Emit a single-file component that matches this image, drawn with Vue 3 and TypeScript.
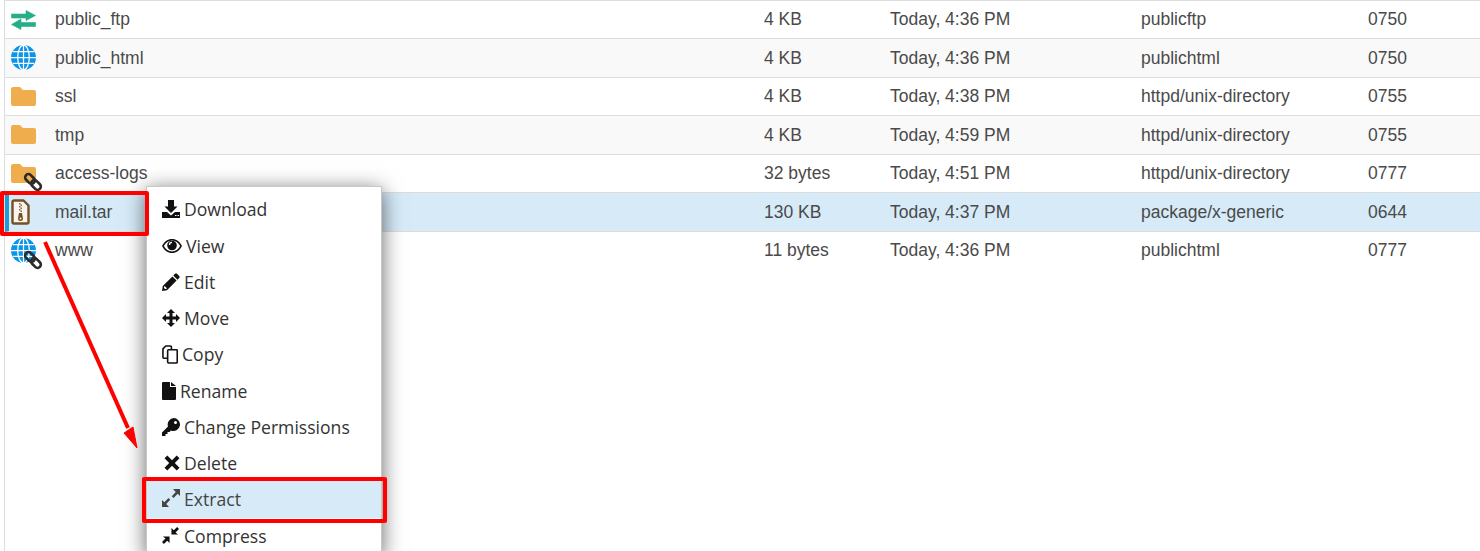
<script setup lang="ts">
interface Row { name: string; icon: string; link?: boolean; size: string; date: string; type: string; perm: string; cls: string }
const rows: Row[] = [
  { name: 'public_ftp', icon: 'ftp', size: '4 KB', date: 'Today, 4:36 PM', type: 'publicftp', perm: '0750', cls: '' },
  { name: 'public_html', icon: 'globe', size: '4 KB', date: 'Today, 4:36 PM', type: 'publichtml', perm: '0750', cls: 'alt' },
  { name: 'ssl', icon: 'folder', size: '4 KB', date: 'Today, 4:38 PM', type: 'httpd/unix-directory', perm: '0755', cls: '' },
  { name: 'tmp', icon: 'folder', size: '4 KB', date: 'Today, 4:59 PM', type: 'httpd/unix-directory', perm: '0755', cls: 'alt' },
  { name: 'access-logs', icon: 'folder', link: true, size: '32 bytes', date: 'Today, 4:51 PM', type: 'httpd/unix-directory', perm: '0777', cls: '' },
  { name: 'mail.tar', icon: 'zip', size: '130 KB', date: 'Today, 4:37 PM', type: 'package/x-generic', perm: '0644', cls: 'sel' },
  { name: 'www', icon: 'globe', link: true, size: '11 bytes', date: 'Today, 4:36 PM', type: 'publichtml', perm: '0777', cls: 'last' },
]
const menu = ['Download', 'View', 'Edit', 'Move', 'Copy', 'Rename', 'Change Permissions', 'Delete', 'Extract', 'Compress']
</script>

<template>
  <div class="page">
    <div class="list">
      <div v-for="r in rows" :key="r.name" class="row" :class="r.cls">
        <div class="ic">
          <svg v-if="r.icon === 'ftp'" width="25" height="20" viewBox="0 0 25 20">
            <path fill="#25ae88" stroke="#25ae88" stroke-width=".6" stroke-linejoin="round" d="M.5 4H15V.5l9.500 5L15 10.500V8H.5zM24.500 12.500H10V9L.5 14.500 10 19.500V16.500h14.500z" />
          </svg>
          <svg v-else-if="r.icon === 'globe'" width="25" height="25" viewBox="0 0 26 26">
            <circle cx="13" cy="13" r="13" fill="#0a95e8" />
            <g fill="none" stroke="#fff" stroke-width="1.300">
              <ellipse cx="13" cy="13" rx="6" ry="13" />
              <path d="M13 0v26M0 13h26M2 7h22M2 19h22" />
            </g>
          </svg>
          <svg v-else-if="r.icon === 'folder'" width="25" height="19" viewBox="0 0 25 19">
            <path fill="#f0ad4e" d="M2 0h7l3 3h11a2 2 0 0 1 2 2v12a2 2 0 0 1-2 2H2a2 2 0 0 1-2-2V2a2 2 0 0 1 2-2z" />
          </svg>
          <svg v-else width="19" height="26" viewBox="0 0 19 26">
            <path fill="#f8f5ee" stroke="#7a4f22" stroke-width="2.400" stroke-linejoin="round" d="M3 1.500h9.500l5 5V23a1.500 1.500 0 0 1-1.500 1.500H3A1.500 1.500 0 0 1 1.500 23V3A1.500 1.500 0 0 1 3 1.500z" />
            <path fill="#8a6a45" d="M8 4h1.500v1.500H8zM9.500 5.500H11V7H9.500zM8 7h1.500v1.500H8zM9.500 8.500H11V10H9.500zM8 10h1.500v1.500H8zM9.500 11.500H11V13H9.500z" />
            <path fill="#7a4f22" fill-rule="evenodd" d="M8 14h3l1 5.500a2.500 2.500 0 1 1-5 0zm1.500 4.500a1 1 0 1 0 0 2 1 1 0 0 0 0-2z" />
          </svg>
          <svg v-if="r.link" class="chain" width="20" height="20" viewBox="0 0 20 20">
            <g fill="none" stroke-width="2.600">
              <rect x="1.500" y="3.700" width="11" height="6.600" rx="3.300" stroke="#2b2b2b" transform="rotate(45 7 7)" />
              <rect x="7.500" y="9.700" width="11" height="6.600" rx="3.300" stroke="#2b2b2b" transform="rotate(45 13 13)" />
            </g>
          </svg>
        </div>
        <div class="name">{{ r.name }}</div>
        <div class="size">{{ r.size }}</div>
        <div class="date">{{ r.date }}</div>
        <div class="type">{{ r.type }}</div>
        <div class="perm">{{ r.perm }}</div>
      </div>
    </div>

    <div class="menu">
      <div v-for="m in menu" :key="m" class="item" :class="{ on: m === 'Extract' }">
        <svg v-if="m === 'Download'" width="18" height="18" viewBox="0 0 18 18">
          <path d="M6 0h6v6.500h3.500L9 13 2.500 6.500H6z" />
          <path d="M0 12h5l4 3.500 4-3.500h5v6H0zM13 15v1h1.500v-1zM15.500 15v1H17v-1z" fill-rule="evenodd" />
        </svg>
        <svg v-else-if="m === 'View'" width="20" height="14" viewBox="0 0 20 14">
          <path d="M0 7c2.300-4.400 5.800-7 10-7s7.700 2.600 10 7c-2.300 4.400-5.800 7-10 7S2.300 11.400 0 7z" />
          <path fill="#fff" d="M1.800 7C3.600 3.800 6.500 1.500 10 1.500S16.400 3.800 18.200 7c-1.800 3.200-4.700 5.500-8.200 5.500S3.600 10.200 1.800 7z" />
          <circle cx="10" cy="6.500" r="4.800" />
          <path fill="#fff" d="M10 2.800a3.200 3.200 0 0 0-3.200 3.200h1.300A1.900 1.900 0 0 1 10 4.100z" />
        </svg>
        <svg v-else-if="m === 'Edit'" width="18" height="18" viewBox="0 0 18 18">
          <path d="M13 .8a1.500 1.500 0 0 1 2 0l2.200 2.200a1.500 1.500 0 0 1 0 2L15.500 6.700 11.300 2.500zM10.400 3.400l4.200 4.200L5 17.200 0 18l.8-5z" />
          <path fill="#fff" d="M2 13.500l.9-.2 1.800 1.800-.2.900-1.400-.1-1.100-1z" />
        </svg>
        <svg v-else-if="m === 'Move'" width="18" height="18" viewBox="0 0 18 18">
          <path d="M9 0l4 4h-2.500v3.500H14V5l4 4-4 4v-2.500h-3.500V14H13l-4 4-4-4h2.500v-3.500H4V13L0 9l4-4v2.500h3.500V4H5z" />
        </svg>
        <svg v-else-if="m === 'Copy'" width="16" height="19" viewBox="0 0 17 20">
          <path fill="none" stroke="#111" stroke-width="1.700" stroke-linejoin="round" d="M10 5V2a1 1 0 0 0-1-1H4L1 4v9a1 1 0 0 0 1 1h4M6 6a1 1 0 0 1 1-1h8.500a.8.8 0 0 1 .7.8V18a1 1 0 0 1-1 1H7a1 1 0 0 1-1-1z" />
        </svg>
        <svg v-else-if="m === 'Rename'" width="14" height="18" viewBox="0 0 14 18">
          <path d="M0 1a1 1 0 0 1 1-1h7v5h6v12a1 1 0 0 1-1 1H1a1 1 0 0 1-1-1zM9 0l5 4H9z" />
        </svg>
        <svg v-else-if="m === 'Change Permissions'" width="18" height="18" viewBox="0 0 18 18">
          <path fill-rule="evenodd" d="M11.500 0A6.500 6.500 0 1 1 9 12.500L7.500 14H5.500v2h-2v2H0v-3.500l6-6A6.500 6.500 0 0 1 11.500 0zm2 3a1.500 1.500 0 1 0 0 3 1.500 1.500 0 0 0 0-3z" />
        </svg>
        <svg v-else-if="m === 'Delete'" class="del" width="16" height="16" viewBox="0 0 16 16">
          <path d="M3.300.5 8 5.200 12.700.5l2.800 2.800L10.800 8l4.700 4.700-2.800 2.800L8 10.800l-4.700 4.700-2.800-2.800L5.200 8 .5 3.300z" />
        </svg>
        <svg v-else-if="m === 'Extract'" class="ext" width="18" height="18" viewBox="0 0 18 18">
          <path fill="#444" d="M11 0h7v7l-2.300-2.300L11.500 9 9.800 7.300l4-4.200zM0 18v-7l2.300 2.300 4.200-4.300 1.700 1.700-4 4.200L7 18z" />
        </svg>
        <svg v-else class="comp" width="17" height="17" viewBox="0 0 18 18">
          <path d="M16 0l2 2-3.700 3.700L17 8h-7V1l2.500 2.500zM8 10v7l-2.500-2.500L2 18l-2-2 3.700-3.700L1 10z" />
        </svg>
        <span>{{ m }}</span>
      </div>
    </div>

    <div class="mark mark-row"></div>
    <div class="mark mark-item"></div>

    <svg class="arrow" width="150" height="240" viewBox="0 0 150 240">
      <path d="M3 2 L86 188" stroke="#f00" stroke-width="4" fill="none" />
      <path d="M95 208 L82 193 L91 187 Z" fill="#f00" stroke="#f00" stroke-width="1" />
    </svg>
  </div>
</template>

<style>
html, body { margin: 0; background: #fff; overflow: hidden; }
</style>

<style scoped>
.page {
  position: relative;
  width: 1480px;
  height: 551px;
  overflow: hidden;
  background: #fff;
  font-family: "Liberation Sans", Arial, sans-serif;
  color: #333;
}
.list {
  margin-left: 4px;
  height: 551px;
  border-left: 1px solid #ddd;
  border-top: 1px solid #ddd;
  box-sizing: border-box;
}
.row {
  display: grid;
  grid-template-columns: 50px 709px 126px 251px 227px 1fr;
  align-items: center;
  height: 38.5px;
  box-sizing: border-box;
  border-bottom: 1px solid #ddd;
  font-size: 17.5px;
  color: #4a4a4a;
}
.row:first-child { height: 38px; }
.row.alt { background: #f9f9f9; }
.row.sel { background: #d6eaf8; border-left: 4px solid #1f9bd8; grid-template-columns: 46px 709px 126px 251px 227px 1fr; }
.row.last { border-bottom: 0; }
.row.alt > div:not(.ic), .row.sel > div:not(.ic), .row:nth-child(3) > div:not(.ic), .row:nth-child(5) > div:not(.ic) { padding-top: 1px; }
.ic {
  position: relative;
  display: flex;
  align-items: center;
  width: 26px;
  height: 26px;
  margin-left: 6px;
}
.sel .ic { margin-left: 2px; }
.chain { position: absolute; left: 12px; top: 12px; }
.menu {
  position: absolute;
  left: 146px;
  top: 186px;
  width: 236px;
  box-sizing: border-box;
  background: #fff;
  border: 1px solid #c9c9c0;
  padding-top: 4.100px;
  box-shadow: 0 4px 20px rgba(0, 0, 0, 0.6);
  font-family: "Open Sans", sans-serif;
  font-size: 17.6px;
  line-height: 24px;
  color: #333;
}
.item {
  display: flex;
  align-items: center;
  gap: 4px;
  height: 36.300px;
  padding-left: 15px;
  white-space: nowrap;
}
.item svg { flex: none; fill: #111; }
.item .del { margin-left: 2px; }
.item .ext { margin-top: -3px; }
.item .comp { margin-right: 1px; }
.item.on { background: #d6eaf8; color: #444; }
.item.on span { margin-top: -2px; }
.mark {
  position: absolute;
  border: 4px solid #f00;
  border-radius: 2px;
  box-sizing: border-box;
}
.mark-row { left: 0; top: 191px; width: 149px; height: 45px; }
.mark-item { left: 142px; top: 477px; width: 245px; height: 46px; }
.arrow { position: absolute; left: 42px; top: 240px; }
</style>
